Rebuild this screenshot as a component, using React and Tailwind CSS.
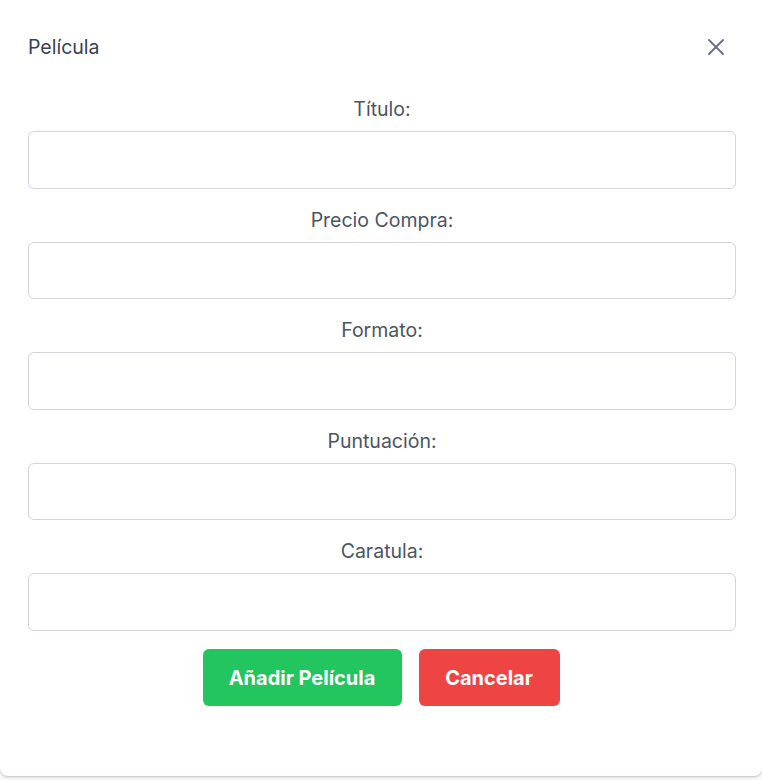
import { X } from "lucide-react";

const fields = ["Título:", "Precio Compra:", "Formato:", "Puntuación:", "Caratula:"];

export default function App() {
  return (
    <div
      className="min-h-[780px] bg-[#f9fafb]"
      style={{ fontFamily: "Inter, 'Noto Sans', sans-serif" }}
    >
      <div className="h-[776px] bg-white rounded-b-lg shadow-[0_1px_3px_rgba(0,0,0,0.25)]">
        {/* Header */}
        <div className="flex items-center justify-between pl-7 pr-[32px] pt-[33px] pb-[34px]">
          <h3 className="text-[19.5px] leading-7 text-[#374151]">Película</h3>
          <button className="flex items-center justify-center w-7 h-7 text-[#6b7280]">
            <X size={28} strokeWidth={1.6} />
          </button>
        </div>

        {/* Form */}
        <form className="pl-7 pr-[26px]">
          {fields.map((f) => (
            <div key={f} className="mb-[17px]">
              <label className="block mb-2 text-center text-[19.5px] leading-7 text-[#4b5563]">
                {f}
              </label>
              <input
                type="text"
                className="block w-full h-[57.5px] rounded-md border border-[#d1d5db] bg-white px-4 outline-none"
              />
            </div>
          ))}
          <div className="flex justify-center gap-[17px] pt-[1.5px] pr-[2px]">
            <button
              type="button"
              className="w-[199px] h-[57px] rounded-md bg-[#22c55e] text-[20px] font-bold text-white"
            >
              Añadir Película
            </button>
            <button
              type="button"
              className="w-[141px] h-[57px] rounded-md bg-[#ef4444] text-[20px] font-bold text-white"
            >
              Cancelar
            </button>
          </div>
        </form>
      </div>
    </div>
  );
}
